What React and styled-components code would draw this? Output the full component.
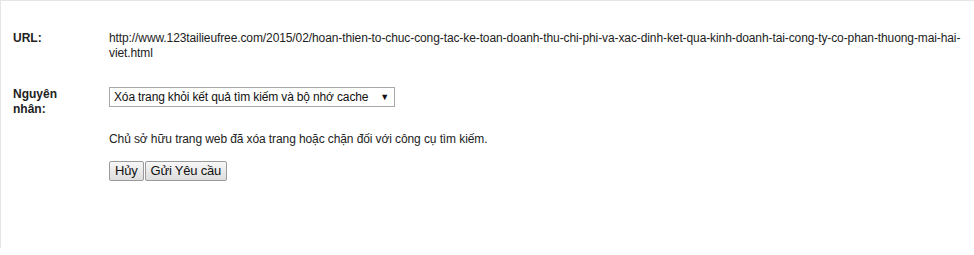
import React from "react";
import styled, { createGlobalStyle } from "styled-components";

const Global = createGlobalStyle`
  html, body { margin: 0; padding: 0; background: #fff; }
  body { font-family: Arial, "Liberation Sans", sans-serif; font-size: 12px; color: #222; letter-spacing: -0.1px; }
`;

const Panel = styled.div`
  box-sizing: border-box;
  height: 248px;
  border-top: 1px solid #e5e5e5;
  border-left: 1px solid #e5e5e5;
  padding: 30px 8px 0 12px;
`;

const Row = styled.div`
  display: flex;
  align-items: flex-start;
  margin-bottom: ${(p) => p.$gap || 0}px;
`;

const Label = styled.div`
  flex: 0 0 96px;
  font-weight: bold;
  line-height: 15px;
  letter-spacing: 0;
`;

const Value = styled.div`
  flex: 1;
  line-height: 15px;
`;

const SelectWrap = styled.div`
  position: relative;
  width: 286px;
  height: 20px;
  margin-bottom: 25px;
`;

const Select = styled.select`
  appearance: none;
  -webkit-appearance: none;
  box-sizing: border-box;
  width: 100%;
  height: 20px;
  margin: 0;
  padding: 0 14px 0 4px;
  border: 1px solid #a9a9a9;
  border-radius: 0;
  background: #fff;
  font-family: Arial, "Liberation Sans", sans-serif;
  font-size: 12px;
  letter-spacing: -0.15px;
  color: #111;
  outline: none;
`;

const Arrow = styled.span`
  position: absolute;
  right: 6px;
  top: 4px;
  font-size: 9px;
  line-height: 12px;
  color: #111;
  pointer-events: none;
`;

const Description = styled.p`
  margin: 0 0 14px;
  line-height: 15px;
`;

const Buttons = styled.div`
  display: flex;
  gap: 1px;
`;

const Button = styled.button`
  box-sizing: border-box;
  height: 20px;
  margin: 0;
  padding: 0 5px;
  border: 1px solid #9a9a9a;
  border-radius: 2px;
  background: linear-gradient(#f7f7f7, #dddddd);
  font-family: Arial, "Liberation Sans", sans-serif;
  font-size: 13px;
  letter-spacing: -0.2px;
  color: #111;
  line-height: 18px;
`;

export default function App() {
  return (
    <>
      <Global />
      <Panel>
        <Row $gap={26}>
          <Label>URL:</Label>
          <Value>
            http://www.123tailieufree.com/2015/02/hoan-thien-to-chuc-cong-tac-ke-toan-doanh-thu-chi-phi-va-xac-dinh-ket-qua-kinh-doanh-tai-cong-ty-co-phan-thuong-mai-hai-viet.html
          </Value>
        </Row>
        <Row>
          <Label>
            Nguyên
            <br />
            nhân:
          </Label>
          <Value>
            <SelectWrap>
              <Select defaultValue="remove">
                <option value="remove">Xóa trang khỏi kết quả tìm kiếm và bộ nhớ cache</option>
              </Select>
              <Arrow>▼</Arrow>
            </SelectWrap>
            <Description>Chủ sở hữu trang web đã xóa trang hoặc chặn đối với công cụ tìm kiếm.</Description>
            <Buttons>
              <Button>Hủy</Button>
              <Button>Gửi Yêu cầu</Button>
            </Buttons>
          </Value>
        </Row>
      </Panel>
    </>
  );
}
